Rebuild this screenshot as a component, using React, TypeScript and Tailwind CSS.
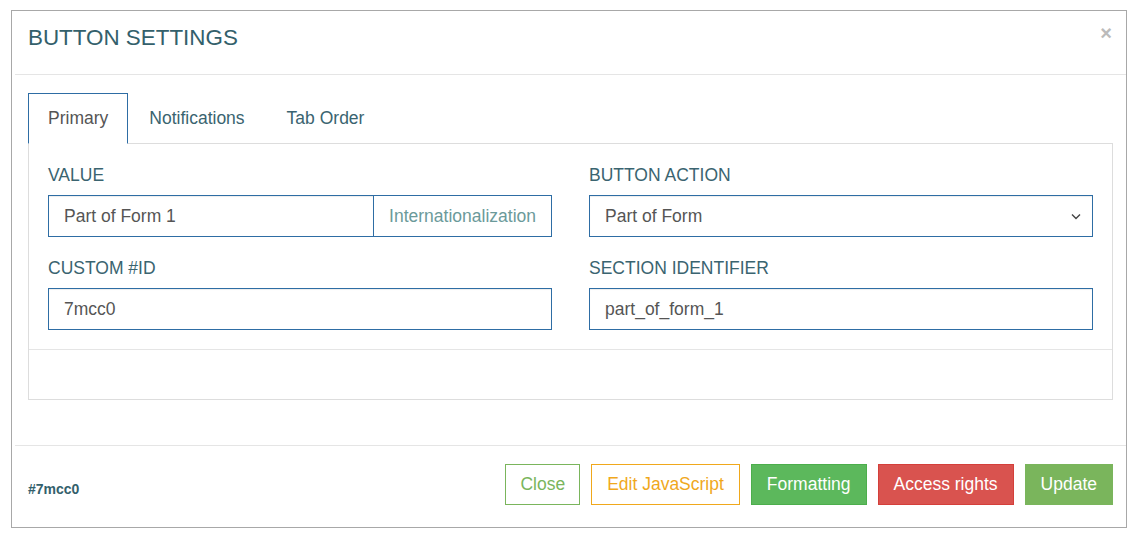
import React from "react"

const font = { fontFamily: '"Liberation Sans", Arial, sans-serif' }

function Field({ label, children }: { label: string; children: React.ReactNode }) {
  return (
    <div className="flex flex-col">
      <label className="text-[17.5px] leading-[24px] text-[#3a6470] mb-[8px]">{label}</label>
      {children}
    </div>
  )
}

const inputCls =
  "h-[42px] w-full border border-[#2e6da4] bg-white px-[15px] text-[17.5px] text-[#555] outline-none shadow-[inset_0_1px_1px_rgba(0,0,0,0.075)]"

export default function App() {
  return (
    <div className="min-h-screen bg-white" style={font}>
      <div className="pt-[10px] pl-[11px]">
        <div className="w-[1116px] h-[518px] border border-[#a8a8a8] bg-white flex flex-col">
          {/* Header */}
          <div className="ml-[3px] h-[64px] shrink-0 border-b border-[#e5e5e5] flex items-center justify-between pl-[13px] pr-[14px]">
            <h4 className="text-[22.4px] text-[#33606b] leading-none -mt-[8px]">BUTTON SETTINGS</h4>
            <span className="text-[#bbb] text-[20px] font-bold leading-none -mt-[20px]">×</span>
          </div>

          {/* Body */}
          <div className="pl-[16px] pr-[13px] pt-[18px] h-[370px] shrink-0">
            <div className="flex border-b border-[#ddd] h-[51px]">
              <div className="px-[19px] flex items-center border border-[#2e6da4] border-b-white -mb-px bg-white text-[17.5px] text-[#555]">
                Primary
              </div>
              <div className="px-[21px] flex items-center text-[17.5px] text-[#3a6470]">Notifications</div>
              <div className="px-[21px] flex items-center text-[17.5px] text-[#3a6470]">Tab Order</div>
            </div>
            <div className="border border-t-0 border-[#ddd] h-[256px] flex flex-col">
              <div className="px-[19px] pt-[19px] pb-[19px] grid grid-cols-2 gap-x-[37px] gap-y-[19px]">
                <Field label="VALUE">
                  <div className="flex">
                    <input className={inputCls + " flex-1 min-w-0"} defaultValue="Part of Form 1" />
                    <span className="h-[42px] -ml-px border border-[#2e6da4] px-[15px] flex items-center text-[17.5px] text-[#6b9a9a] whitespace-nowrap">
                      Internationalization
                    </span>
                  </div>
                </Field>
                <Field label="BUTTON ACTION">
                  <div className="relative">
                    <div className={inputCls + " flex items-center"}>Part of Form</div>
                    <svg
                      className="absolute right-[12px] top-[18px]"
                      width="10"
                      height="7"
                      viewBox="0 0 10 7"
                      fill="none"
                      stroke="#444"
                      strokeWidth="1.4"
                    >
                      <path d="M1 1.5l4 4 4-4" />
                    </svg>
                  </div>
                </Field>
                <Field label="CUSTOM #ID">
                  <input className={inputCls} defaultValue="7mcc0" />
                </Field>
                <Field label="SECTION IDENTIFIER">
                  <input className={inputCls} defaultValue="part_of_form_1" />
                </Field>
              </div>
              <div className="border-t border-[#e5e5e5] flex-1" />
            </div>
          </div>

          {/* Footer */}
          <div className="ml-[3px] border-t border-[#e5e5e5] flex-1 flex items-center justify-between pl-[13px] pr-[13px]">
            <span className="text-[14px] font-bold text-[#33606b] mt-[5px]">#7mcc0</span>
            <div className="flex gap-[11px] -mt-[4px]">
              <button className="h-[41px] px-[14px] border border-[#7ab55c] text-[#7ab55c] text-[17.5px] bg-white">Close</button>
              <button className="h-[41px] px-[15px] border border-[#f0a81c] text-[#f0a81c] text-[17.5px] bg-white">Edit JavaScript</button>
              <button className="h-[41px] px-[15px] border border-[#4cae4c] bg-[#5cb85c] text-white text-[17.5px]">Formatting</button>
              <button className="h-[41px] px-[15px] border border-[#d43f3a] bg-[#d9534f] text-white text-[17.5px]">Access rights</button>
              <button className="h-[41px] px-[15px] border border-[#7ab55c] bg-[#7ab55c] text-white text-[17.5px]">Update</button>
            </div>
          </div>
        </div>
      </div>
    </div>
  )
}
